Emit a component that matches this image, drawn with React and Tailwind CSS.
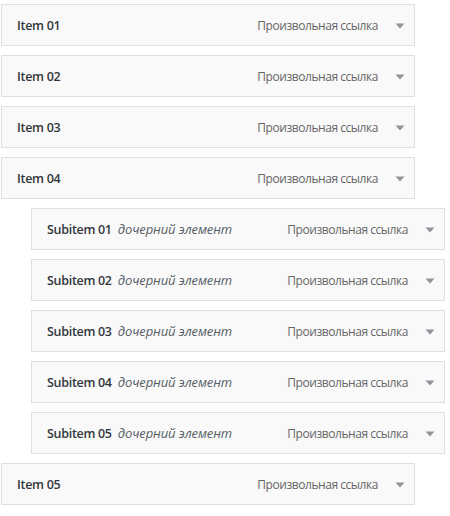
const rows = [
  { title: 'Item 01' },
  { title: 'Item 02' },
  { title: 'Item 03' },
  { title: 'Item 04' },
  { title: 'Subitem 01', sub: true },
  { title: 'Subitem 02', sub: true },
  { title: 'Subitem 03', sub: true },
  { title: 'Subitem 04', sub: true },
  { title: 'Subitem 05', sub: true },
  { title: 'Item 05' },
];

const MenuRow = ({ title, sub }) => (
  <div className={`${sub ? 'ml-[30px]' : ''} w-[414px] h-[42px] flex items-center justify-between bg-[#f9f9f9] border border-[#dfdfdf] pl-[15px] pr-[8px] pt-[2px]`}>
    <div className="flex items-baseline gap-[6px]">
      <span className="text-[12.5px] font-semibold tracking-[-0.3px] text-[#32373c]">{title}</span>
      {sub && <span className="text-[13px] italic tracking-[-0.1px] text-[#555d66]">дочерний элемент</span>}
    </div>
    <div className="flex items-center gap-[17px]">
      <span className="text-[12px] tracking-[-0.45px] text-[#666]">Произвольная ссылка</span>
      <svg width="10" height="6" viewBox="0 0 10 6" className="mr-px">
        <path d="M0.5 0.5 L9.5 0.5 L5 5.5 Z" fill="#8f959a" />
      </svg>
    </div>
  </div>
);

export default function App() {
  return (
    <div className="w-[450px] h-[516px] bg-white pt-[4px] pl-[1px] flex flex-col gap-[9px] font-['Open_Sans','Noto_Sans',sans-serif]">
      {rows.map((r) => (
        <MenuRow key={r.title} {...r} />
      ))}
    </div>
  );
}
